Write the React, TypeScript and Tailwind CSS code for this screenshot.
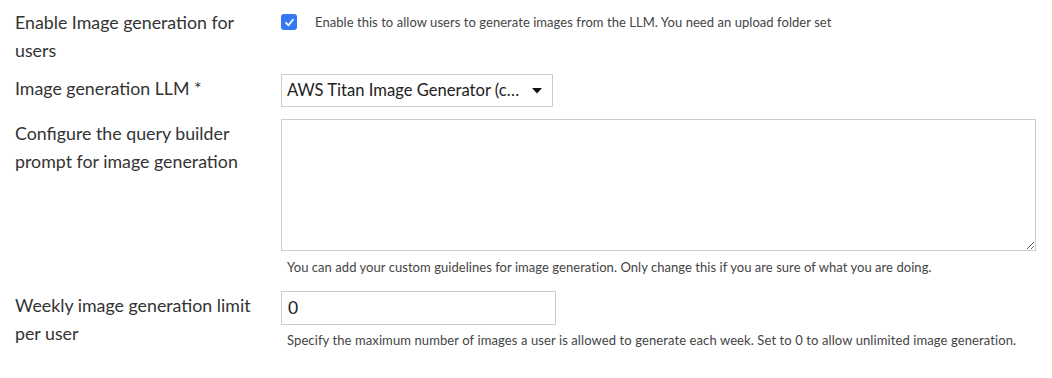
import React from 'react';

const font = "font-['Lato','Noto_Sans',sans-serif]";

export default function App() {
    return (
        <div className={`${font} bg-white w-[1052px] h-[378px] pt-[8px] pl-[15px] text-[#333]`}>
            {/* enable */}
            <div className="flex mb-[10px]">
                <div className="w-[266px] shrink-0 text-[17.8px] leading-[28px] pr-4">Enable Image generation for users</div>
                <div className="flex items-start pt-[6px]">
                    <span className="w-4 h-4 rounded-[3px] bg-[#3478f6] flex items-center justify-center">
                        <svg width="11" height="11" viewBox="0 0 12 12" fill="none">
                            <path d="M2.2 6.4 L4.9 9 L9.8 3" stroke="white" strokeWidth="2" strokeLinecap="round" strokeLinejoin="round" />
                        </svg>
                    </span>
                    <span className="ml-[18px] -mt-px text-[13px] tracking-[0.05px] leading-[18px] text-[#444]">Enable this to allow users to generate images from the LLM. You need an upload folder set</span>
                </div>
            </div>

            {/* llm */}
            <div className="flex mb-[12px]">
                <div className="w-[266px] shrink-0 text-[17.8px] leading-[28px] pr-4">Image generation LLM *</div>
                <div className="w-[272px] h-[33px] border border-[#ccc] flex items-center justify-between pl-[5px] pr-[10px] text-[16.6px] text-[#222]">
                    <span className="whitespace-nowrap">AWS Titan Image Generator (c…</span>
                    <svg width="10" height="6" viewBox="0 0 10 6" className="shrink-0">
                        <path d="M0 0 H10 L5 5.5 Z" fill="#111" />
                    </svg>
                </div>
            </div>

            {/* prompt */}
            <div className="flex mb-[15px]">
                <div className="w-[266px] shrink-0 text-[17.8px] leading-[28px] pr-4">Configure the query builder prompt for image generation</div>
                <div className="flex flex-col">
                    <textarea className="w-[755px] h-[132px] border border-[#ccc] outline-none p-1" />
                    <div className="mt-[7px] pl-[6px] text-[13px] tracking-[0.05px] leading-[18px] text-[#444]">You can add your custom guidelines for image generation. Only change this if you are sure of what you are doing.</div>
                </div>
            </div>

            {/* limit */}
            <div className="flex">
                <div className="w-[266px] shrink-0 text-[17.8px] leading-[28px] pr-4">Weekly image generation limit per user</div>
                <div className="flex flex-col">
                    <div className="w-[275px] h-[34px] border border-[#ccc] flex items-center pl-[6px] text-[17.5px] text-[#222]">0</div>
                    <div className="mt-[6px] pl-[6px] text-[13px] tracking-[0.1px] leading-[18px] text-[#444]">Specify the maximum number of images a user is allowed to generate each week. Set to 0 to allow unlimited image generation.</div>
                </div>
            </div>
        </div>
    );
}
